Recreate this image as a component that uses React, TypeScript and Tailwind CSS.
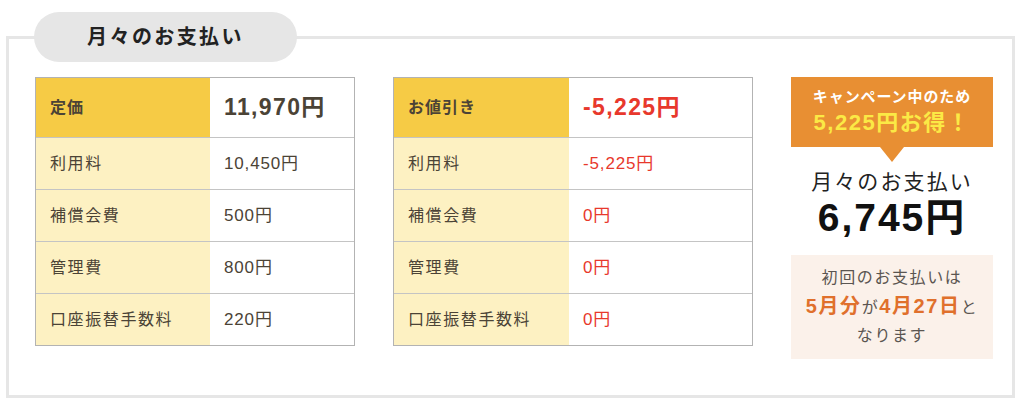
import React from "react";

const font = { fontFamily: '"Liberation Sans", "Noto Sans CJK JP", sans-serif' };

type Row = { label: string; value: string };

function PriceTable({
  width,
  labelWidth,
  headLabel,
  headValue,
  rows,
  red,
}: {
  width: string;
  labelWidth: string;
  headLabel: string;
  headValue: string;
  rows: Row[];
  red?: boolean;
}) {
  const valColor = red ? "text-[#e8382c]" : "text-[#4b4336]";
  return (
    <div className={`${width} shrink-0 border border-[#b3b3b3] flex flex-col`}>
      <div className="flex h-[59px]">
        <div className={`${labelWidth} shrink-0 bg-[#f6cb45] flex items-center pl-[14px] text-[16px] font-bold tracking-[0.06em] text-[#4b4336]`}>
          {headLabel}
        </div>
        <div className={`flex-1 bg-white flex items-center pl-[14px] text-[23px] font-bold tracking-[0.06em] ${valColor}`}>
          {headValue}
        </div>
      </div>
      {rows.map((r) => (
        <div key={r.label} className="flex h-[52px] border-t border-[#c4c4c4]">
          <div className={`${labelWidth} shrink-0 bg-[#fdf1c2] flex items-center pl-[14px] text-[16px] tracking-[0.1em] text-[#4b4336]`}>
            {r.label}
          </div>
          <div className={`flex-1 bg-white flex items-center pl-[14px] text-[17px] tracking-[0.05em] ${valColor}`}>
            {r.value}
          </div>
        </div>
      ))}
    </div>
  );
}

export default function App() {
  return (
    <div className="w-[1024px] h-[412px] bg-white pt-[36px] pl-[6px]" style={font}>
      <div className="relative w-[1009px] h-[362px] border-[3px] border-[#e6e6e6] pt-[38px] pl-[26px]">
        <div className="absolute left-[25px] top-[-27px] w-[263px] h-[50px] rounded-full bg-[#e6e6e6] flex items-center justify-center text-[20px] font-bold tracking-[0.12em] text-[#222]">
          月々のお支払い
        </div>
        <div className="flex items-start gap-[38px]">
          <PriceTable
            width="w-[320px]"
            labelWidth="w-[174px]"
            headLabel="定価"
            headValue="11,970円"
            rows={[
              { label: "利用料", value: "10,450円" },
              { label: "補償会費", value: "500円" },
              { label: "管理費", value: "800円" },
              { label: "口座振替手数料", value: "220円" },
            ]}
          />
          <PriceTable
            width="w-[360px]"
            labelWidth="w-[175px]"
            headLabel="お値引き"
            headValue="-5,225円"
            red
            rows={[
              { label: "利用料", value: "-5,225円" },
              { label: "補償会費", value: "0円" },
              { label: "管理費", value: "0円" },
              { label: "口座振替手数料", value: "0円" },
            ]}
          />
          <div className="w-[202px] shrink-0 flex flex-col items-center">
            <div className="w-full h-[70px] bg-[#e88f33] flex flex-col items-center justify-center">
              <div className="text-[15px] font-bold tracking-[0.06em] text-white leading-[22px]">
                キャンペーン中のため
              </div>
              <div className="text-[22px] font-bold tracking-[0.07em] text-[#fbe945] leading-[30px]">
                5,225円お得！
              </div>
            </div>
            <div className="w-0 h-0 border-l-[12px] border-r-[12px] border-t-[15px] border-l-transparent border-r-transparent border-t-[#e88f33]" />
            <div className="mt-[6px] text-[21px] leading-[28px] tracking-[0.1em] text-[#222]">
              月々のお支払い
            </div>
            <div className="text-[39px] leading-[44px] font-bold tracking-[0.05em] text-[#111]">
              6,745円
            </div>
            <div className="mt-[15px] w-full bg-[#fbf1ea] py-[9px] flex flex-col items-center text-[16px] leading-[28px] tracking-[0.1em] text-[#5a5551]">
              <div>初回のお支払いは</div>
              <div>
                <span className="text-[20px] font-bold text-[#e0702c]">5月分</span>
                <span>が</span>
                <span className="text-[20px] font-bold text-[#e0702c]">4月27日</span>
                <span>と</span>
              </div>
              <div>なります</div>
            </div>
          </div>
        </div>
      </div>
    </div>
  );
}
